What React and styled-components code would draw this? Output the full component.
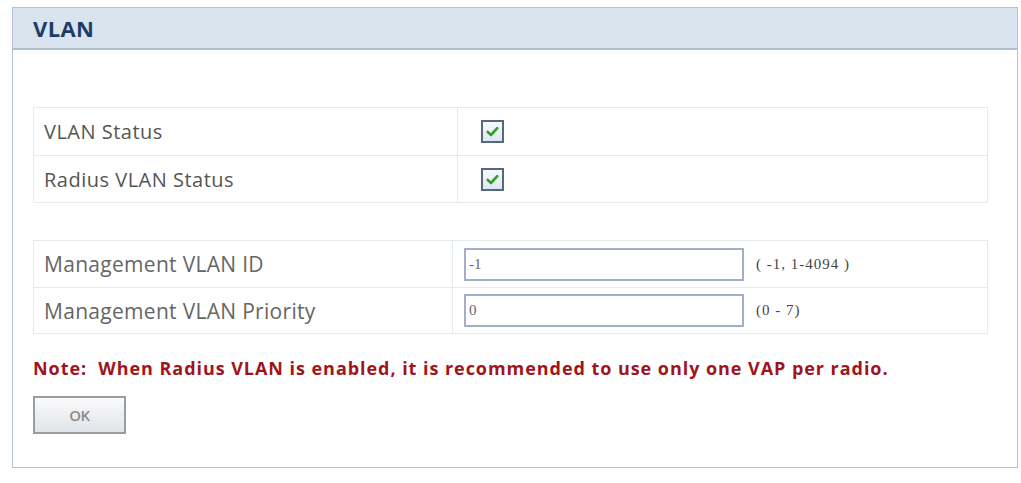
import React from "react";
import styled, { createGlobalStyle } from "styled-components";

const Global = createGlobalStyle`
  html, body { margin: 0; padding: 0; background: #fff; }
  body { font-family: "Open Sans", "Noto Sans", sans-serif; }
`;

const Page = styled.div`
  padding: 7px 3px 0 12px;
`;

const Panel = styled.section`
  width: 1006px;
  height: 461px;
  box-sizing: border-box;
  border: 1px solid #b4c2d2;
  display: flex;
  flex-direction: column;
`;

const Header = styled.header`
  height: 40px;
  background: #dae4ee;
  border-bottom: 2px solid #b0bfd0;
  display: flex;
  align-items: center;
  padding-left: 20px;
  font-family: "Open Sans", sans-serif;
  font-weight: 700;
  font-size: 22px;
  color: #1e3e68;
  letter-spacing: 0.4px;
`;

const Body = styled.div`
  padding: 57px 0 0 20px;
  display: flex;
  flex-direction: column;
`;

const Table = styled.div`
  width: 955px;
  box-sizing: border-box;
  border: 1px solid #e3ebf1;
  display: grid;
  grid-template-columns: ${(p) => p.$split}px 1fr;
  margin-bottom: ${(p) => p.$mb || 0}px;
`;

const Label = styled.div`
  height: ${(p) => p.$h}px;
  display: flex;
  align-items: center;
  padding-left: 10px;
  border-right: 1px solid #e3ebf1;
  border-top: ${(p) => (p.$first ? "none" : "1px solid #e3ebf1")};
  font-size: ${(p) => p.$fs}px;
  letter-spacing: ${(p) => p.$ls}px;
  color: ${(p) => p.$color};
`;

const Cell = styled.div`
  display: flex;
  align-items: center;
  gap: 12px;
  padding-left: ${(p) => p.$pl}px;
  border-top: ${(p) => (p.$first ? "none" : "1px solid #e3ebf1")};
`;

const Check = styled.span`
  width: 23px;
  height: 23px;
  box-sizing: border-box;
  border: 2px solid #566780;
  background: linear-gradient(#f7f9fb, #e2e8ef);
  display: inline-flex;
  align-items: center;
  justify-content: center;
`;

const Input = styled.div`
  width: 280px;
  height: 33px;
  box-sizing: border-box;
  border: 2px solid #a3afc6;
  background: #fff;
  display: flex;
  align-items: center;
  padding-left: 3px;
  font-family: "Liberation Serif", serif;
  font-size: 15px;
  color: #666;
`;

const Hint = styled.span`
  font-family: "Liberation Serif", serif;
  font-size: 15px;
  letter-spacing: 1px;
  color: #444;
`;

const Note = styled.p`
  margin: 22px 0 0 0;
  font-family: "Open Sans", sans-serif;
  font-weight: 700;
  font-size: 18px;
  color: #a0141c;
  letter-spacing: 0.95px;
  white-space: pre;
`;

const Button = styled.button`
  margin-top: 16px;
  width: 93px;
  height: 38px;
  border: 2px solid #999ca2;
  border-radius: 0;
  background: linear-gradient(#fbfbfc, #e0e3e7);
  font-family: "Open Sans", sans-serif;
  font-weight: 600;
  font-size: 15px;
  letter-spacing: -0.5px;
  color: #8a8a8a;
  padding: 0;
`;

const CheckMark = () => (
  <Check>
    <svg width="13" height="11" viewBox="0 0 13 11">
      <path d="M1.8 6 L5 9 L11.2 2.2" fill="none" stroke="#2ca02f" strokeWidth="2.6" strokeLinecap="round" strokeLinejoin="round" />
    </svg>
  </Check>
);

export default function App() {
  return (
    <Page>
      <Global />
      <Panel>
        <Header>VLAN</Header>
        <Body>
          <Table $split={424} $mb={37}>
            <Label $h={47} $fs={20} $ls={0.5} $color="#555" $first>VLAN Status</Label>
            <Cell $pl={23} $first><CheckMark /></Cell>
            <Label $h={46} $fs={20} $ls={0.5} $color="#555">Radius VLAN Status</Label>
            <Cell $pl={23}><CheckMark /></Cell>
          </Table>
          <Table $split={419}>
            <Label $h={46} $fs={21} $ls={0.3} $color="#666" $first>Management VLAN ID</Label>
            <Cell $pl={11} $first>
              <Input>-1</Input>
              <Hint>( -1, 1-4094 )</Hint>
            </Cell>
            <Label $h={45} $fs={21} $ls={0.3} $color="#666">Management VLAN Priority</Label>
            <Cell $pl={11}>
              <Input>0</Input>
              <Hint>(0 - 7)</Hint>
            </Cell>
          </Table>
          <Note>{"Note:  When Radius VLAN is enabled, it is recommended to use only one VAP per radio."}</Note>
          <div>
            <Button>OK</Button>
          </div>
        </Body>
      </Panel>
    </Page>
  );
}
